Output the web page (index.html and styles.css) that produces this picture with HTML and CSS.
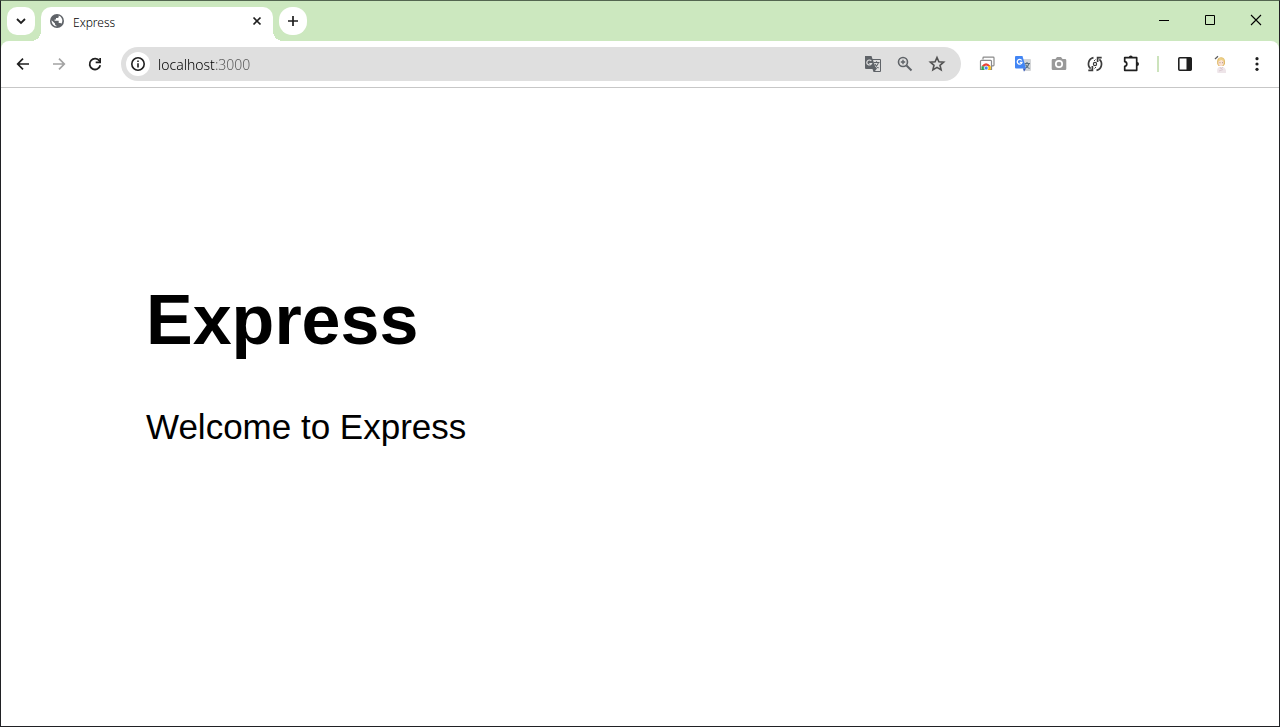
FILE: index.html
```html
<!DOCTYPE html>
<html lang="en">
<head>
  <meta charset="UTF-8" />
  <meta name="viewport" content="width=device-width, initial-scale=1" />
  <title>Express</title>
  <link rel="stylesheet" href="styles.css">
</head>
<body>
  <header class="titlebar">
    <button class="chip" type="button" aria-label="Search tabs">
      <svg width="16" height="16" viewBox="0 0 16 16"><path d="M4 6l4 4 4-4" fill="none" stroke="#1f1f1f" stroke-width="1.8"/></svg>
    </button>
    <div class="tab">
      <svg width="16" height="16" viewBox="0 0 16 16">
        <circle cx="8" cy="8" r="7" fill="#5f6368"/>
        <path d="M9.7 2.6v1.2q0 1.3-1.4 1.3H7v1.3H5.6v1.4h4.1v2.1h1.4q1 0 1.3.9A5.5 5.5 0 0 0 9.700 2.600z" fill="#fff"/>
        <path d="M2.600 7.200l3.400 3.300v.7q0 1.300 1.400 1.300v1A5.500 5.500 0 0 1 2.600 7.200z" fill="#fff"/>
      </svg>
      <span class="tab-title">Express</span>
      <button class="tab-close" type="button" aria-label="Close tab">
        <svg width="16" height="16" viewBox="0 0 16 16"><path d="M4.500 4.500l7 7M11.500 4.500l-7 7" stroke="#1f1f1f" stroke-width="1.700"/></svg>
      </button>
    </div>
    <button class="chip chip-round" type="button" aria-label="New tab">
      <svg width="16" height="16" viewBox="0 0 16 16"><path d="M8 3v10M3 8h10" stroke="#1f1f1f" stroke-width="1.700"/></svg>
    </button>
    <div class="window-buttons">
      <button type="button" aria-label="Minimize"><svg width="12" height="12" viewBox="0 0 12 12"><path d="M1 6.500h10" stroke="#000"/></svg></button>
      <button type="button" aria-label="Maximize"><svg width="12" height="12" viewBox="0 0 12 12"><path d="M1.500 1.500h9v9h-9z" fill="none" stroke="#000"/></svg></button>
      <button type="button" aria-label="Close"><svg width="12" height="12" viewBox="0 0 12 12"><path d="M1 1l10 10M11 1L1 11" stroke="#000" stroke-width="1.100"/></svg></button>
    </div>
  </header>

  <nav class="toolbar">
    <button class="tool" type="button" aria-label="Back">
      <svg width="16" height="16" viewBox="0 0 16 16"><path d="M14 8H3M8 2.700L2.700 8 8 13.300" fill="none" stroke="#1f1f1f" stroke-width="1.700"/></svg>
    </button>
    <button class="tool" type="button" aria-label="Forward">
      <svg width="16" height="16" viewBox="0 0 16 16"><path d="M2 8h11M8 2.700L13.300 8 8 13.300" fill="none" stroke="#a3a3a3" stroke-width="1.700"/></svg>
    </button>
    <button class="tool" type="button" aria-label="Reload">
      <svg width="16" height="16" viewBox="0 0 16 16"><path d="M13.300 9.300A5.400 5.400 0 1 1 12.500 5L13.300 6" fill="none" stroke="#1f1f1f" stroke-width="1.800"/><path d="M12.300 2H14v5.200H8.700V5.500h3.600z" fill="#1f1f1f"/></svg>
    </button>

    <form class="omnibox">
      <button class="site-info" type="button" aria-label="View site information">
        <svg width="16" height="16" viewBox="0 0 16 16"><circle cx="8" cy="8" r="6.200" fill="none" stroke="#1f1f1f" stroke-width="1.600"/><path d="M7.200 7.200h1.600v4.300H7.200zM7.200 4.500h1.600v1.600H7.200z" fill="#1f1f1f"/></svg>
      </button>
      <input class="address" type="text" value="localhost:3000" aria-label="Address" spellcheck="false">
      <button class="omni-icon" type="button" aria-label="Translate this page">
        <svg width="18" height="18" viewBox="0 0 18 18">
          <path d="M1 1h6.500l1 3H16q1 0 1 1v11q0 1-1 1H9.500l-1-3H2q-1 0-1-1V2z" fill="#5f6368"/>
          <path d="M9 5h7v11h-5l2-2.500-1.800-2z" fill="#dfdfdf"/>
          <path d="M7.300 6A2.500 2.500 0 1 0 7.600 8.500H5.300" fill="none" stroke="#dfdfdf" stroke-width="1.200"/>
          <path d="M10 7.500h5.500M12.500 6.300v1.200M14.500 7.500q-.7 3-3.500 5M11 9q1.400 2.700 3.500 4" fill="none" stroke="#5f6368" stroke-width="1.100"/>
        </svg>
      </button>
      <button class="omni-icon" type="button" aria-label="Zoom">
        <svg width="18" height="18" viewBox="0 0 18 18"><circle cx="7" cy="7" r="4.500" fill="none" stroke="#5f6368" stroke-width="1.600"/><path d="M10.500 10.500l5 5" stroke="#5f6368" stroke-width="2"/><path d="M7 4.800v4.400M4.800 7h4.400" stroke="#5f6368" stroke-width="1.400"/></svg>
      </button>
      <button class="omni-icon" type="button" aria-label="Bookmark this tab">
        <svg width="18" height="18" viewBox="0 0 18 18"><path d="M9 2.500l1.900 4.300 4.700.4-3.600 3.100 1.100 4.600L9 12.400l-4.100 2.500L6 10.300 2.400 7.200l4.700-.4z" fill="none" stroke="#525252" stroke-width="1.600"/></svg>
      </button>
    </form>

    <button class="tool" type="button" aria-label="Chrome Web Store">
      <svg width="18" height="18" viewBox="0 0 18 18">
        <path d="M5 4.500V3q0-.8.800-.8h9.400q.8 0 .8.800v7q0 .8-.8.800H14" fill="none" stroke="#8a8a8a" stroke-width="1.200"/>
        <path d="M2.500 14.500V6.300q0-.9.900-.9h9.200q.9 0 .9.900v8.200z" fill="#fff" stroke="#8a8a8a" stroke-width="1.200"/>
        <path d="M3.700 11Q8 5.400 12.500 11L8 12.500z" fill="#ea4335"/>
        <path d="M3.700 11Q3 13 3.800 15H7.500L8 12z" fill="#34a853"/>
        <path d="M8 11h4.500q.8 2 0 4H9z" fill="#fbbc04"/>
        <circle cx="8.200" cy="13" r="2" fill="#4285f4" stroke="#fff" stroke-width=".8"/>
      </svg>
    </button>
    <button class="tool" type="button" aria-label="Google Translate">
      <svg width="18" height="18" viewBox="0 0 18 18">
        <path d="M8 4h8q1 0 1 1v10q0 1-1 1h-6z" fill="#d4d6d8"/>
        <path d="M10.500 8.500H16M13 7v1.500M15 8.500q-.8 3-3.500 4.500M11.500 9.500q1.500 3 4 4" fill="none" stroke="#5a7184" stroke-width="1.200"/>
        <path d="M2 1h6.500L12 13.500H2q-1 0-1-1V2q0-1 1-1z" fill="#4285f4"/>
        <path d="M9 13.500h3l-2 3.300z" fill="#3356b8"/>
        <path d="M7.700 5.500A2.400 2.400 0 1 0 8 7.400H5.800" fill="none" stroke="#fff" stroke-width="1.300"/>
      </svg>
    </button>
    <button class="tool" type="button" aria-label="Screen capture">
      <svg width="18" height="18" viewBox="0 0 18 18"><path d="M3 4h2.500L7 2h4l1.500 2H15q1.300 0 1.300 1.300v8.400Q16.300 15 15 15H3q-1.300 0-1.300-1.300V5.300Q1.700 4 3 4z" fill="#999"/><circle cx="9" cy="9" r="3.200" fill="#999" stroke="#fff" stroke-width="1.700"/></svg>
    </button>
    <button class="tool" type="button" aria-label="Auto refresh">
      <svg width="18" height="18" viewBox="0 0 18 18">
        <path d="M7.500 2.700A6.400 6.400 0 0 0 4.600 13.700M10.500 15.300A6.400 6.400 0 0 0 13.400 4.300" fill="none" stroke="#3c3c3c" stroke-width="1.700"/>
        <path d="M2.300 15.300H6.400V11M15.700 2.700H11.600V7" fill="none" stroke="#3c3c3c" stroke-width="1.700"/>
        <circle cx="9" cy="9" r="1.600" fill="none" stroke="#3c3c3c" stroke-width="1.200"/>
        <path d="M9.500 4.500L8 6M8.500 13.500L10 12" stroke="#3c3c3c"/>
      </svg>
    </button>
    <button class="tool" type="button" aria-label="Extensions">
      <svg width="18" height="18" viewBox="0 0 18 18"><path d="M2.700 2.700h12v12.600h-12v-4q2.100-.3 2.100-2.300T2.700 6.700z" fill="none" stroke="#1f1f1f" stroke-width="1.700" stroke-linejoin="round"/><path d="M6.900 2.500a1.900 1.900 0 0 1 3.800 0zM15 7a2 2 0 0 1 0 4z" fill="#1f1f1f"/></svg>
    </button>
    <span class="divider"></span>
    <button class="tool" type="button" aria-label="Side panel">
      <svg width="16" height="16" viewBox="0 0 16 16"><rect x="1.800" y="1.800" width="12.400" height="12.400" rx="1" fill="#fff" stroke="#1f1f1f" stroke-width="1.600"/><path d="M9.500 1.500h4q1 0 1 1v11q0 1-1 1h-4z" fill="#1f1f1f"/></svg>
    </button>
    <button class="tool" type="button" aria-label="Profile">
      <svg width="20" height="20" viewBox="0 0 20 20">
        <path d="M6.500 19q-1.200-4.500 1.500-6h4q3.500 1 3 6z" fill="#eee5e9"/>
        <path d="M6.200 10Q5.300 3.500 10 3.300T14 10l-1.500 2h-5z" fill="#e0b966"/>
        <ellipse cx="10" cy="8.800" rx="2.700" ry="3.300" fill="#fae1d3"/>
        <path d="M7 7.200Q9.500 7 10.500 5.200 11 7 13.200 7.500L12.500 4.500 8.500 4z" fill="#eed38a"/>
        <path d="M8.600 8.700h.8M11 8.700h.8" stroke="#84645c" stroke-width=".8"/>
        <path d="M4 5l3-2.800" stroke="#5c5c5c" stroke-width="1.200"/>
        <path d="M9 13l1.200 2 1.600-2M8 17l4-1.500" fill="none" stroke="#d6c3cb" stroke-width=".8"/>
      </svg>
    </button>
    <button class="tool" type="button" aria-label="Menu">
      <svg width="16" height="16" viewBox="0 0 16 16" fill="#1f1f1f"><circle cx="8" cy="2.700" r="1.600"/><circle cx="8" cy="8" r="1.600"/><circle cx="8" cy="13.300" r="1.600"/></svg>
    </button>
  </nav>

  <main class="page">
    <h1>Express</h1>
    <p>Welcome to Express</p>
  </main>
</body>
</html>
```
FILE: styles.css
```css
* {
  box-sizing: border-box;
}
body {
  margin: 0;
  min-height: 100vh;
  display: flex;
  flex-direction: column;
  background: #fff;
  border: 1px solid #202124;
  border-top-color: #536650;
  font-family: "Noto Sans", sans-serif;
}
button {
  display: flex;
  align-items: center;
  justify-content: center;
  flex: none;
  padding: 0;
  border: 0;
  background: none;
}
svg {
  display: block;
  flex: none;
}

/* tab strip */
.titlebar {
  display: flex;
  height: 40px;
  padding: 6px 0 0 6px;
  background: #cce8bf;
}
.chip {
  width: 28px;
  height: 28px;
  border-radius: 10px;
  background: #fff;
}
.chip-round {
  border-radius: 13px;
}
.tab {
  position: relative;
  display: flex;
  align-items: center;
  gap: 8px;
  width: 232px;
  margin: 0 6px;
  padding: 0 8px 6px;
  background: #fff;
  border-radius: 10px 10px 0 0;
}
.tab::before,
.tab::after {
  content: "";
  position: absolute;
  bottom: 0;
  width: 10px;
  height: 10px;
}
.tab::before {
  right: 100%;
  background: radial-gradient(circle at 0 0, transparent 10px, #fff 10px);
}
.tab::after {
  left: 100%;
  background: radial-gradient(circle at 100% 0, transparent 10px, #fff 10px);
}
.tab-title {
  flex: 1;
  padding-top: 2px;
  font-size: 12px;
  font-weight: 300;
  color: #000;
}
.window-buttons {
  display: flex;
  height: 26px;
  margin-left: auto;
}
.window-buttons button {
  width: 46px;
}

/* address bar row, its rounded top corners sit on the strip colour */
.toolbar {
  position: relative;
  display: flex;
  align-items: center;
  height: 47px;
  padding: 0 4px;
  background: #cce8bf;
  border-bottom: 1px solid #c7c7c7;
}
.toolbar::before {
  content: "";
  position: absolute;
  inset: 0;
  background: #fff;
  border-radius: 8px 8px 0 0;
}
.toolbar > * {
  position: relative;
}
.tool {
  width: 36px;
  height: 34px;
}
.omnibox {
  display: flex;
  align-items: center;
  flex: 1;
  height: 34px;
  margin: 0 8px;
  padding: 0 8px 0 5px;
  border-radius: 17px;
  background: #dfdfdf;
}
.site-info {
  width: 24px;
  height: 24px;
  border-radius: 50%;
  background: #fff;
}
/* host is dark, the port after it is grey */
.address {
  flex: 1;
  min-width: 0;
  height: 22px;
  margin-left: 8px;
  padding: 0;
  border: 0;
  outline: 0;
  font-family: inherit;
  font-size: 14px;
  font-weight: 300;
  color: transparent;
  background: linear-gradient(90deg, #000 57px, #555 57px);
  -webkit-background-clip: text;
  background-clip: text;
}
.omni-icon {
  width: 32px;
  height: 24px;
}
.divider {
  width: 2px;
  height: 16px;
  margin: 0 8px;
  background: #cce3bc;
}

/* page content */
.page {
  flex: 1;
  padding: 145px;
  font: 35px "Liberation Sans", Arial, sans-serif;
  color: #000;
}
.page h1 {
  margin: 0 0 47px;
  padding-top: 47px;
  font-size: 70px;
}
.page p {
  margin: 0;
}
```
